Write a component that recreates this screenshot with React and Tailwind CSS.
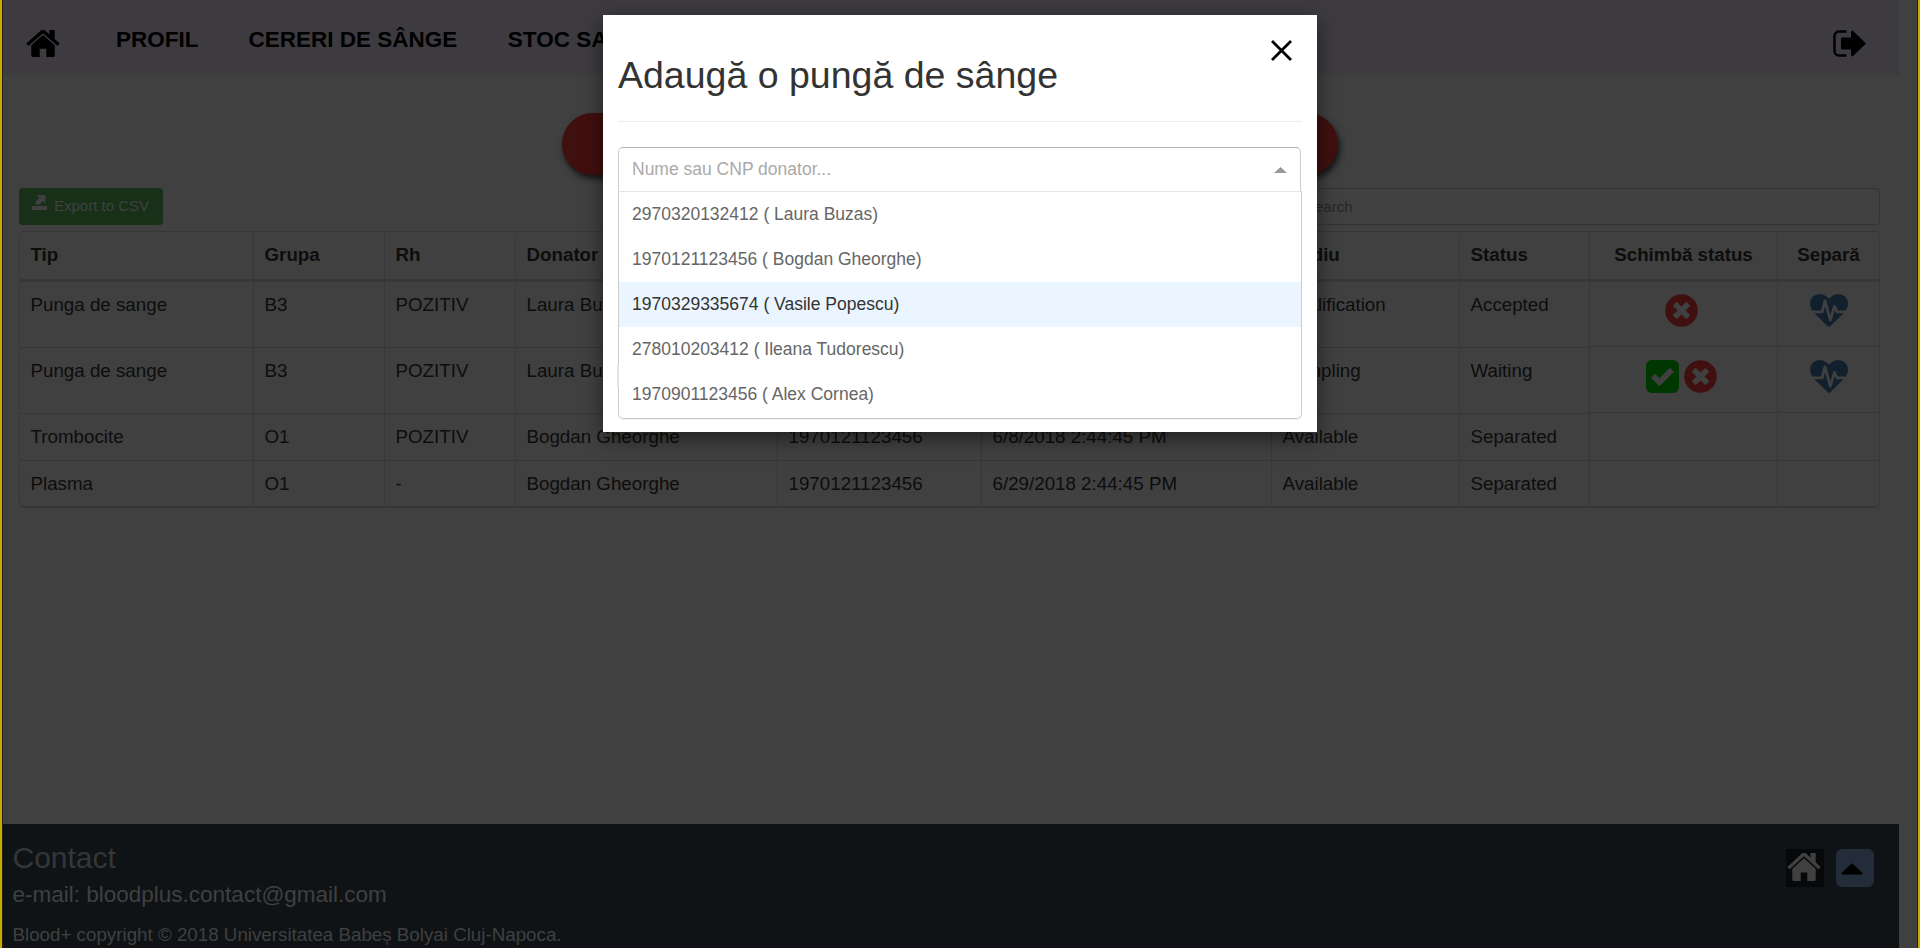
import React from "react";
import { MdClose } from "react-icons/md";

function HomeIcon({ className }) {
  return (
    <svg viewBox="60 275 1672 1261" preserveAspectRatio="none" fill="currentColor" className={className}>
      <path d="M1472 992v480q0 26-19 45t-45 19h-350v-384h-324v384h-350q-26 0-45-19t-19-45v-480q0-1 .5-3t.5-3l575-474 575 474q1 2 1 6zm223-69l-62 74q-8 9-21 11h-3q-13 0-21-7l-692-577-692 577q-12 8-24 7-13-2-21-11l-62-74q-8-10-7-23.5t11-21.5l719-599q32-26 76-26t76 26l244 204v-195q0-14 9-23t23-9h192q14 0 23 9t9 23v408l219 182q10 8 11 21.5t-7 23.5z" />
    </svg>
  );
}

function SignOutIcon({ className }) {
  return (
    <svg viewBox="0 0 33 27" className={className}>
      <path d="M13.5 1.5H6A4.500 4.500 0 0 0 1.500 6v15A4.500 4.500 0 0 0 6 25.500h7.500" fill="none" stroke="currentColor" strokeWidth="2.500" />
      <path d="M8.500 8H18.500V1.500L19.500 1 32.500 13.500 19.500 26 18.500 25.500V19H8.500z" fill="currentColor" stroke="currentColor" strokeWidth="1" strokeLinejoin="round" />
    </svg>
  );
}

function ExportIcon({ className }) {
  return (
    <svg viewBox="0 0 15 15" fill="currentColor" className={className}>
      <path d="M0 11h15v4H0zM5 0h8.500v8.500L11 6 7.500 9.500H3.500V7L7.500 2.700z" />
    </svg>
  );
}

function HeartbeatIcon({ className }) {
  return (
    <svg viewBox="0 128 1792 1536" preserveAspectRatio="none" fill="currentColor" className={className}>
      <path d="M1280 1024h305q-5 6-10 10.500t-9 7.500l-3 4-623 600q-18 18-44 18t-44-18l-624-602q-5-2-21-20h369q22 0 39.500-13.500t22.500-34.500l70-281 190 667q6 20 23 33t39 13q21 0 38-13t23-33l146-485 56 112q18 35 57 35zm512-428q0 145-103 300h-369l-111-221q-8-17-25.500-27t-36.500-8q-45 5-56 46l-129 430-196-686q-6-20-23.500-33t-39.500-13-39 13.500-22 34.500l-116 464h-423q-103-155-103-300 0-220 127-344t351-124q62 0 126.500 21.500t120 58 95.500 68.500 76 68q36-36 76-68t95.500-68.500 120-58 126.500-21.500q224 0 351 124t127 344z" />
    </svg>
  );
}

function RejectIcon({ className }) {
  return (
    <svg viewBox="0 0 33 33" className={className}>
      <circle cx="16.500" cy="16.500" r="16.300" fill="#401010" />
      <path d="M11.700 11.700l9.600 9.600M21.300 11.700l-9.600 9.600" fill="none" stroke="#404040" strokeWidth="5.600" strokeLinecap="square" />
    </svg>
  );
}

function AcceptIcon({ className }) {
  return (
    <svg viewBox="0 0 33 33" className={className}>
      <rect width="33" height="33" rx="6" fill="#003600" />
      <path d="M7 15.800l6.500 6.400L26 9.700" fill="none" stroke="#404040" strokeWidth="5.600" />
    </svg>
  );
}

const columns = ["Tip", "Grupa", "Rh", "Donator", "CNP", "Data", "Stadiu", "Status", "Schimbă status", "Separă"];
const widths = [234, 131, 131, 262, 204, 290, 188, 130, 188, 101];
const rows = [
  { cells: ["Punga de sange", "B3", "POZITIV", "Laura Buzas", "2970320132412", "6/8/2018 2:44:45 PM", "Qualification", "Accepted"], actions: ["no"], h: "h-[66px]" },
  { cells: ["Punga de sange", "B3", "POZITIV", "Laura Buzas", "2970320132412", "6/8/2018 2:44:45 PM", "Sampling", "Waiting"], actions: ["yes", "no"], h: "h-[66px]" },
  { cells: ["Trombocite", "O1", "POZITIV", "Bogdan Gheorghe", "1970121123456", "6/8/2018 2:44:45 PM", "Available", "Separated"], h: "h-[47px]" },
  { cells: ["Plasma", "O1", "-", "Bogdan Gheorghe", "1970121123456", "6/29/2018 2:44:45 PM", "Available", "Separated"], h: "h-[47px]" },
];
const donors = [
  "2970320132412 ( Laura Buzas)",
  "1970121123456 ( Bogdan Gheorghe)",
  "1970329335674 ( Vasile Popescu)",
  "278010203412 ( Ileana Tudorescu)",
  "1970901123456 ( Alex Cornea)",
];

function Navbar() {
  return (
    <nav className="flex h-[75px] shrink-0 bg-[#3d3b40] pr-[33px] pl-[23px] text-[22.5px] leading-[26px] font-bold text-black">
      <HomeIcon className="mt-[30px] h-[27px] w-[34px]" />
      <span className="mt-[27px] ml-[56px]">PROFIL</span>
      <span className="mt-[27px] ml-[50px]">CERERI DE SÂNGE</span>
      <span className="mt-[27px] ml-[50.500px]">STOC SANGE</span>
      <SignOutIcon className="mt-[30px] ml-auto h-[27px] w-[33px]" />
    </nav>
  );
}

function StockTable() {
  return (
    <div className="mt-[6px] flex h-[277px] w-[1861px] flex-col overflow-hidden rounded-[5px] border border-b-2 border-[#373737] text-[18.75px] leading-[27px] text-[#0d0d0d]">
      <div className="flex h-[50px] shrink-0 border-b-[3px] border-[#373737] pt-px font-bold">
        {columns.map((c, i) => (
          <div key={c} style={{ width: widths[i] }} className={"shrink-0 pt-[8px] " + (i > 7 ? "text-center " : "pl-[10.500px] ") + (i < 9 ? "border-r border-[#373737]" : "")}>
            {c}
          </div>
        ))}
      </div>
      {rows.map((r, ri) => (
        <div key={ri} className={"flex shrink-0 " + r.h}>
          {r.cells.map((c, i) => (
            <div key={i} style={{ width: widths[i] }} className={"shrink-0 border-r border-[#373737] pt-[9px] pl-[10.500px] " + (ri < 3 ? "border-b" : "")}>
              {c}
            </div>
          ))}
          <div className={"flex w-[188px] shrink-0 justify-center gap-[5px] border-r border-[#373737] pt-[12px] pr-[4px] " + (ri < 2 ? "h-[65px] border-b" : ri === 2 ? "border-b" : "")}>
            {r.actions?.map((a) => (a === "no" ? <RejectIcon key={a} className="size-[33px]" /> : <AcceptIcon key={a} className="size-[33px]" />))}
          </div>
          <div className={"flex w-[101px] shrink-0 justify-center border-[#373737] pt-[12px] " + (ri < 2 ? "h-[65px] border-b" : ri === 2 ? "border-b" : "")}>
            {r.actions && <HeartbeatIcon className="h-[33px] w-[38px] text-[#12202d]" />}
          </div>
        </div>
      ))}
    </div>
  );
}

function Footer() {
  return (
    <footer className="mt-auto flex h-[124px] shrink-0 justify-between border-b border-[#170f14] bg-[#0f1316] pl-[9.500px] text-[#404040]">
      <div>
        <h3 className="mt-[17px] text-[30px] leading-[33px] text-[#363636]">Contact</h3>
        <p className="mt-[8px] text-[22.5px] leading-[25px]">e-mail: bloodplus.contact@gmail.com</p>
        <p className="mt-[15px] text-[18.75px] leading-[25px]">Blood+ copyright © 2018 Universitatea Babeș Bolyai Cluj-Napoca.</p>
      </div>
      <div className="mt-[25px] mr-[25px] flex gap-[12px]">
        <div className="flex size-[38px] bg-[#06080a] pt-[4px] pl-px">
          <HomeIcon className="h-[28px] w-[34px]" />
        </div>
        <div className="size-[38px] rounded-[6px] bg-[#232d39] pt-[14px] pl-[5px]">
          <svg viewBox="0 0 22 12" className="h-[12px] w-[22px] text-black">
            <path d="M1.500 10.500 11 1.500l9.500 9z" fill="currentColor" stroke="currentColor" strokeWidth="2" strokeLinejoin="round" />
          </svg>
        </div>
      </div>
    </footer>
  );
}

function AddBagModal() {
  return (
    <div className="absolute top-[15px] left-[601px] h-[417px] w-[714px] bg-white px-[15px] shadow-[0_6px_19px_rgba(0,0,0,0.5)]">
      <svg viewBox="0 0 21 21" className="absolute top-[25px] right-[25px] size-[21px] text-black">
        <path d="M1 1l19 19M20 1L1 20" fill="none" stroke="currentColor" strokeWidth="2.800" />
      </svg>
      <h2 className="mt-[40px] text-[37.5px] leading-[41px] text-[#333]">Adaugă o pungă de sânge</h2>
      <div className="mt-[25px] h-px bg-[#eee]" />
      <div className="mt-[25px] flex h-[44px] w-[683px] justify-between rounded-t-[5px] border border-b-0 border-[#ccc] border-t-[#b3b3b3] pr-[13px] pl-[13px] text-[17.5px] leading-[43px] text-[#aaa]">
        <span>Nume sau CNP donator...</span>
        <svg viewBox="0 0 13 6" className="mt-[19px] h-[6px] w-[13px] text-[#999]">
          <path d="M6.500 0 13 6H0z" fill="currentColor" />
        </svg>
      </div>
      <ul className="h-[228px] rounded-b-[5px] border border-[#ccc] border-t-[#e6e6e6] text-[17.5px] leading-[45px] text-[#666] shadow-[0_1px_0_rgba(0,0,0,0.06)]">
        {donors.map((d, i) => (
          <li key={d} className={"h-[45px] pl-[13px] " + (i === 2 ? "bg-[#ebf5ff] text-[#333]" : "")}>
            {d}
          </li>
        ))}
      </ul>
      <div className="absolute top-[349px] left-[13.500px] h-[24px] w-[2px] rounded-l-full bg-[#e2e2e2]" />
    </div>
  );
}

export default function App() {
  return (
    <div className="relative h-[948px] w-[1920px] overflow-hidden border-x-2 border-[#c9ab00] bg-[#404040] font-['Liberation_Sans',Arial,sans-serif]">
      <div className="flex h-full flex-col border-x border-[#26241a]">
        <div className="flex w-[1896px] grow flex-col">
          <Navbar />
          <div className="pl-[16px]">
            <div className="mt-[38px] ml-[543px] h-[62px] w-[776px] rounded-[31px] bg-[#400f0f] shadow-[2px_4px_6px_rgba(0,0,0,0.7)]" />
            <div className="mt-[13px] flex w-[1861px] justify-between">
              <div className="flex h-[37px] w-[144px] rounded-[4px] bg-[#173017] pl-[13px] text-[15px] leading-[36px] text-[#404040]">
                <ExportIcon className="mt-[7px] mr-[7px] size-[15px]" />
                Export to CSV
              </div>
              <div className="h-[37px] w-[589px] rounded-[4px] border border-[#333] pl-[13px] text-[15px] leading-[36px] text-[#272727]">Search</div>
            </div>
            <StockTable />
          </div>
          <Footer />
        </div>
      </div>
      <div className="absolute inset-0">
        <AddBagModal />
      </div>
    </div>
  );
}
